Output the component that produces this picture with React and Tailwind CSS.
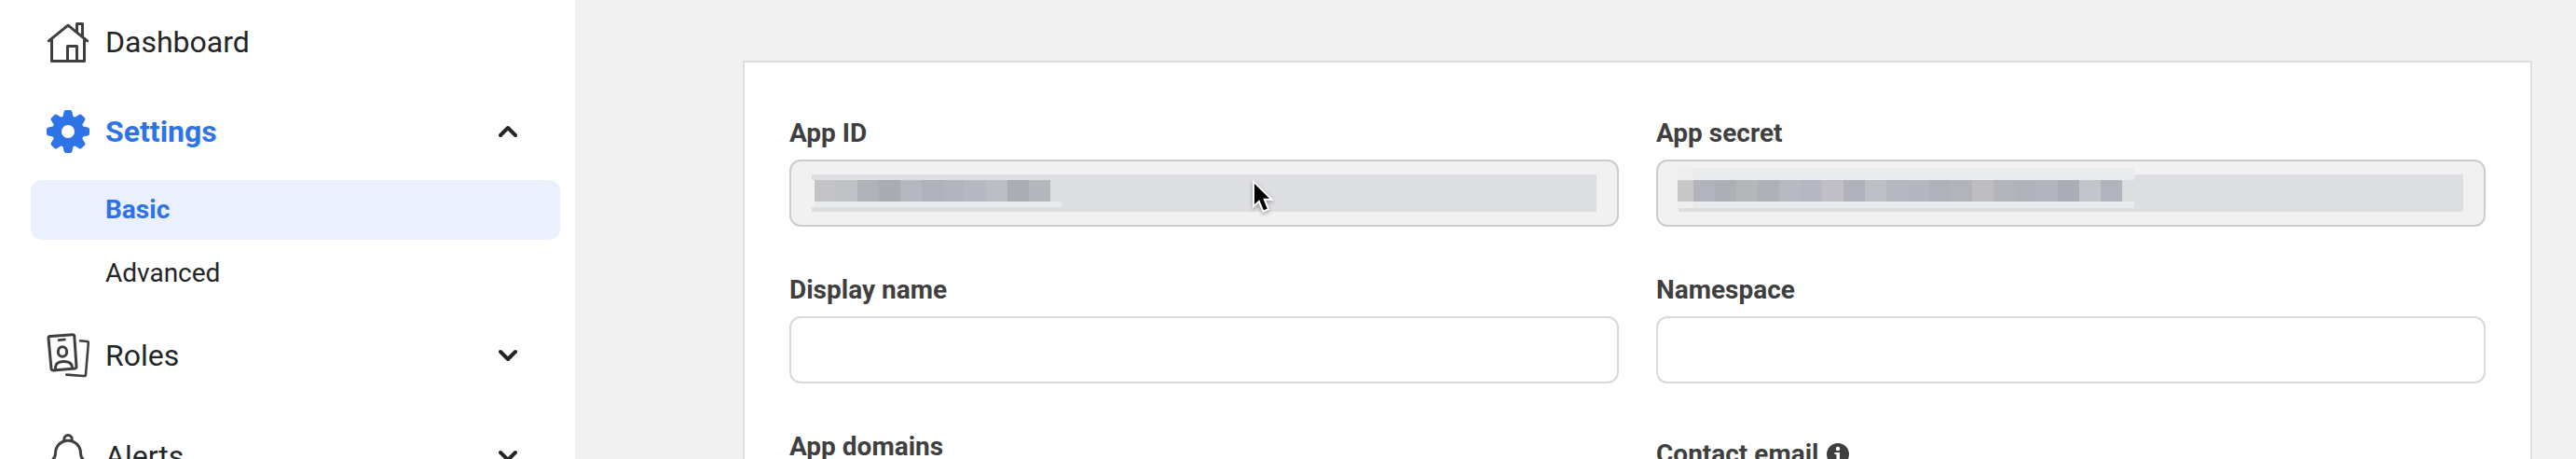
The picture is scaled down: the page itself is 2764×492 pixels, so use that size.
const R = "font-['Roboto',sans-serif]";

function Home() {
  return (
    <svg className="h-12 w-12" viewBox="0 0 48 48" fill="none" stroke="#3f3f3f" strokeWidth="3" strokeLinecap="round" strokeLinejoin="round">
      <path d="M3.300 22.800 24 6.200 44.700 22.800" />
      <path d="M6.500 21.500V44.500H41.500V21.500" />
      <path d="M23.500 44.500V28.500H33.500V44.500" />
      <path d="M33.500 13V4.500H39.500V18" />
    </svg>
  );
}

function Gear() {
  return (
    <svg className="h-12 w-12" viewBox="-24 -24 48 48" fill="#2f74e6">
      <path fillRule="evenodd" d="M0-17a17 17 0 1 0 0 34a17 17 0 1 0 0-34ZM0-7a7 7 0 1 1 0 14a7 7 0 1 1 0-14Z" />
      {[0, 45, 90, 135, 180, 225, 270, 315].map((a) => (
        <path key={a} transform={`rotate(${a})`} d="M-6-14 -4.4-21Q-4-23-2.2-23H2.2Q4-23 4.4-21L6-14Z" />
      ))}
    </svg>
  );
}

function Roles() {
  return (
    <svg className="h-[50px] w-12" viewBox="0 0 48 50" fill="none" stroke="#3f3f3f" strokeWidth="3" strokeLinecap="round" strokeLinejoin="round">
      <path d="M4.500 4.600 28.700 2.700Q30.600 2.600 30.800 4.400L33 37Q33 38.700 31.400 38.900L8 40.900Q6.200 41 6 39.200L3 6.400Q3 4.700 4.500 4.600Z" />
      <path d="M14 8.600 20.500 7.900" strokeWidth="2.600" />
      <ellipse cx="18" cy="21" rx="4.700" ry="5.300" />
      <path d="M10.500 40V37.500Q10.800 32 18.500 31.500 27 31 28.300 36.500V38.500" />
      <path d="M37 9.300 44.500 10Q46 10.200 45.800 12L43 45.500Q42.800 47.200 41 47L22.300 45.600" strokeWidth="2.600" />
    </svg>
  );
}

function Bell() {
  return (
    <svg className="h-12 w-12" viewBox="0 0 48 48" fill="none" stroke="#3f3f3f" strokeWidth="3" strokeLinecap="round" strokeLinejoin="round">
      <path d="M19.800 7.500V5.700a4.200 4.200 0 0 1 8.400 0V7.500" />
      <path d="M6 32V29Q10.500 26.500 10.500 20.700A13.500 13.500 0 0 1 37.500 20.700Q37.500 26.500 42 29V37H6Z" />
    </svg>
  );
}

function Chevron({ up }) {
  return (
    <svg className="h-5 w-5" viewBox="0 0 20 20" fill="none" stroke="#232526" strokeWidth="4" strokeLinecap="round" strokeLinejoin="round">
      <path d={up ? "M2 14 10 6 18 14" : "M2 6 10 14 18 6"} />
    </svg>
  );
}

function NavItem({ icon, label, active, chevron, className }) {
  return (
    <div className={`flex shrink-0 items-center pl-[49px] pr-[62px] ${className}`}>
      <div className="flex w-16 shrink-0 items-center">{icon}</div>
      <span className={active ? "grow text-[32px] leading-10 font-bold text-[#2f74e6]" : "grow text-[32px] leading-10 text-[#232526]"}>{label}</span>
      {chevron && <Chevron up={chevron === "up"} />}
    </div>
  );
}

function Field({ label, children, disabled, className = "" }) {
  return (
    <div className={`flex flex-col gap-2 ${className}`}>
      <div className="flex h-10 items-center gap-[9px] text-[28px] font-bold text-[#3f3f3f]">{label}</div>
      <div className={disabled ? "h-[72px] rounded-xl border-2 border-[#cccccc] bg-[#f1f1f1]" : "h-[72px] rounded-xl border-2 border-[#d9d9d9] bg-white"}>{children}</div>
    </div>
  );
}

function Strip({ colors, first, cell }) {
  return (
    <div className="flex h-[23px]">
      {colors.map((c, i) => (
        <div key={i} style={{ background: c, width: i === 0 ? first : cell }} />
      ))}
    </div>
  );
}

const idColors = ["#c4c4c8", "#bfc2c5", "#b0b2ba", "#aaacb4", "#b6b8c1", "#b0b2bb", "#b3b5be", "#b6b9c2", "#bbbec2", "#abadb5", "#b4b7bb"];
const secretColors = ["#c8c8cb", "#b1b4bd", "#acafb6", "#b4b7ba", "#aeb0b8", "#b7bac3", "#b5b8c2", "#bfbfc5", "#b0b2bb", "#bcbfc3", "#b5b8c1", "#b4b7c0", "#b0b2bb", "#b2b4bc", "#bebdc2", "#b3b5bc", "#b1b3bc", "#b3b5be", "#abadb6", "#c2c5c9", "#b1b3bd"];

export default function App() {
  return (
    <div className={`flex h-[492px] w-[2764px] overflow-hidden bg-[#f1f1f1] ${R}`}>
      <nav className="flex w-[617px] shrink-0 flex-col overflow-hidden bg-white">
        <NavItem icon={<Home />} label="Dashboard" className="h-[90px]" />
        <NavItem icon={<Gear />} label="Settings" active chevron="up" className="mt-[3px] h-[96px]" />
        <div className="mt-1 ml-[33px] flex h-16 w-[568px] shrink-0 items-center rounded-xl bg-[#eaf0fd] pl-20 text-[28px] font-bold text-[#2f74e6]">Basic</div>
        <div className="ml-[33px] flex h-[72px] shrink-0 items-center pl-20 text-[28px] text-[#232526]">Advanced</div>
        <NavItem icon={<Roles />} label="Roles" chevron="down" className="mt-1 h-[96px]" />
        <NavItem icon={<Bell />} label="Alerts" chevron="down" className="mt-3 h-[96px]" />
      </nav>
      <main className="pt-[65px] pl-[180px]">
        <section className="grid w-[1920px] grid-cols-2 content-start gap-x-10 gap-y-12 border-2 border-[#dddee3] bg-white px-12 pt-14 pb-12">
          <Field label="App ID" disabled>
            <div className="relative flex h-full items-center px-[22px]">
              <div className="flex h-10 w-full bg-[#dddee2]">
                <div className="mt-[6px] flex h-[29px] border-l-[3px] border-[#f1f1f1]">
                  <div>
                    <Strip colors={idColors} first={23} cell={23} />
                    <div className="h-[6px] w-[265px] bg-[#e9eaec]" />
                  </div>
                </div>
              </div>
              <svg className="absolute top-3 left-[486px] h-12 w-12 drop-shadow-[0_2px_2px_rgba(0,0,0,0.3)]" viewBox="0 0 48 48">
                <path d="M11 12V34L16.200 29.200 20.900 40.300 24.800 38.700 20.200 27.700H27Z" stroke="white" strokeWidth="4" style={{ paintOrder: "stroke" }} />
              </svg>
            </div>
          </Field>
          <Field label="App secret" disabled>
            <div className="flex h-full items-center px-[22px]">
              <div className="flex h-10 w-full bg-[#dddee2]">
                <div className="-mt-[7px] -ml-px">
                  <div className="flex h-[13px] w-[490px] bg-[#eaebed]"><div className="w-[17px] bg-[#eeeeee]" /></div>
                  <Strip colors={secretColors} first={17} cell={23} />
                  <div className="flex h-[7px] w-[490px] bg-[#eaebed]"><div className="w-[17px] bg-[#eeefee]" /></div>
                </div>
              </div>
            </div>
          </Field>
          <Field label="Display name" />
          <Field label="Namespace" />
          <Field label="App domains" />
          <Field
            className="pt-2"
            label={
              <>
                Contact email
                <svg className="h-6 w-6" viewBox="0 0 24 24">
                  <circle cx="12" cy="12" r="12" fill="#3f3f3f" />
                  <circle cx="12" cy="6" r="2.200" fill="white" />
                  <path d="M8.500 10H14V17H16V19H8.500V17H10.500V12H8.500Z" fill="white" />
                </svg>
              </>
            }
          />
        </section>
      </main>
    </div>
  );
}
